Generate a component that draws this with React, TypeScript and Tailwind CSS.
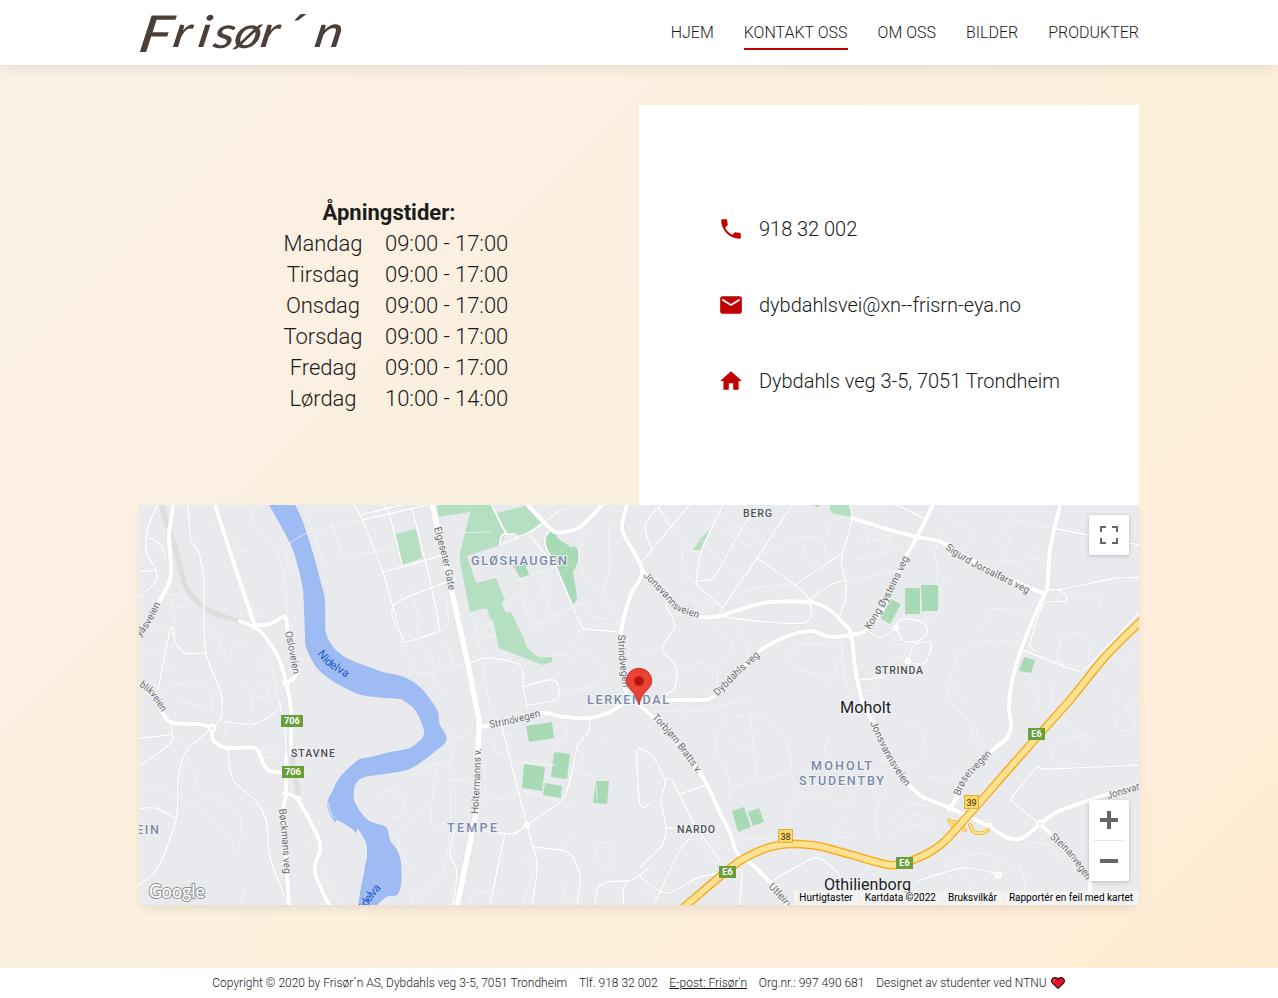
import { MdEmail, MdHome, MdPhone } from "react-icons/md";

const nav = ["HJEM", "KONTAKT OSS", "OM OSS", "BILDER", "PRODUKTER"];

const hours: [string, string][] = [
  ["Mandag", "09:00 - 17:00"],
  ["Tirsdag", "09:00 - 17:00"],
  ["Onsdag", "09:00 - 17:00"],
  ["Torsdag", "09:00 - 17:00"],
  ["Fredag", "09:00 - 17:00"],
  ["Lørdag", "10:00 - 14:00"],
];

const contacts = [
  { Icon: MdPhone, text: "918 32 002" },
  { Icon: MdEmail, text: "dybdahlsvei@xn--frisrn-eya.no" },
  { Icon: MdHome, text: "Dybdahls veg 3-5, 7051 Trondheim" },
];

type P = [number, number];

// Turns a list of points into a path whose corners are rounded off.
function smooth(s: string): string {
  const n = s.trim().split(/[\s,]+/).map(Number);
  const p: P[] = [];
  for (let i = 0; i < n.length; i += 2) p.push([n[i], n[i + 1]]);
  let d = `M${p[0][0]} ${p[0][1]}`;
  for (let i = 0; i < p.length - 1; i++) {
    const a = p[i - 1] ?? p[i];
    const b = p[i];
    const c = p[i + 1];
    const e = p[i + 2] ?? c;
    const k = 7;
    d += `C${b[0] + (c[0] - a[0]) / k} ${b[1] + (c[1] - a[1]) / k} ${c[0] - (e[0] - b[0]) / k} ${c[1] - (e[1] - b[1]) / k} ${c[0]} ${c[1]}`;
  }
  return d;
}

const river =
  "268,503 290,543 298,567 303,590 304,610 305,633 306,647 316,667 331,680 345,688 361,695 385,698 400,699 403,700 415,710 423,727 423,737 410,748 390,752 371,757 358,760 340,777 333,790 328,800 328,810 335,822 337,820 351,828 356,833 358,829 366,843 367,857 365,867 359,907 374,907 386,897 397,895 401,885 401,863 397,850 390,840 386,827 368,820 355,803 354,790 357,782 365,777 385,774 407,770 420,763 433,753 445,743 446,735 440,725 437,710 423,690 410,680 398,675 383,672 351,660 336,650 326,633 325,600 321,583 315,560 308,537 301,517 294,503";

const parks = [
  "395,534 416,529 422,558 402,565",
  "436,505 472,505 470,512 438,517",
  "472,505 492,505 506,533 500,545 467,556 476,583 496,578 505,600 501,602 506,613 511,612 523,637 527,647 537,656 552,657 552,662 543,665 499,648 493,620 490,619 487,608 470,612 460,563 460,553",
  "497,513 528,505 533,508 543,522 528,533 517,535 506,533",
  "830,505 850,505 851,517 830,513",
  "814,505 820,505 817,508",
  "693,550 700,539 710,529 707,540 702,550",
];

const fields = [
  "550,530 556,533 557,538 572,548 574,546 578,550 578,562 573,572 576,590 577,600 572,605 556,568 544,547 545,537",
  "513,565 525,563 529,575 520,578",
  "889,598 901,604 890,624 879,617",
  "905,588 920,588 920,614 905,614",
  "921,585 938,585 938,611 922,611",
  "1024,657 1035,660 1031,673 1019,671",
  "526,726 552,722 554,738 529,742",
  "524,764 545,767 542,791 522,788",
  "554,752 570,754 567,779 551,777",
  "545,783 562,786 561,798 543,795",
  "596,781 609,781 607,804 593,803",
  "732,811 744,807 751,827 738,832",
  "748,812 759,808 764,822 753,826",
];

const lanes = [
  "251,505 253,520 276,550 285,583 287,617",
  "140,622 170,631",
  "285,550 290,543 313,531 360,521",
  "288,550 286,560 291,566 288,572 283,574",
  "313,531 308,520 305,508",
  "313,531 319,548 324,565",
  "330,517 343,555 350,556 398,547",
  "209,525 215,522 223,532 255,613 258,612",
  "228,541 236,539 241,551 248,549",
  "172,600 174,608 184,606 186,598 182,594 165,595",
  "173,606 175,640 170,645",
  "206,626 212,627 224,655 230,655 234,642 244,647",
  "266,642 270,660 276,685 279,710",
  "257,657 260,667 270,667",
  "240,677 243,687 254,688 266,682 268,697 253,697 253,710",
  "140,650 160,657 175,670",
  "163,692 175,685 192,682 205,686 212,698 212,710",
  "180,700 200,706 212,710",
  "460,533 490,532",
  "405,642 412,665 424,674 470,663",
  "440,598 446,598 448,625 440,632",
  "408,586 418,618 418,642 432,660 434,670 441,656",
  "432,670 436,685 450,698",
  "447,641 454,672",
  "470,612 478,640 490,710",
  "476,640 495,635",
  "474,629 492,624",
  "520,580 530,605 544,635",
  "517,580 557,566",
  "540,578 548,576 550,585 542,588 550,610 560,625",
  "507,605 512,598 520,596 530,620",
  "524,633 540,622 570,608 585,605 592,616 608,619",
  "582,627 575,640 580,650 600,662 602,675 590,686 558,694",
  "592,515 580,545 583,575 602,595 617,620",
  "608,520 609,570 602,595",
  "527,647 540,657 566,655 577,668",
  "655,505 670,520 690,550 700,550",
  "705,519 747,545 755,540",
  "700,540 740,575 752,570",
  "715,510 765,545",
  "747,520 765,540",
  "683,550 683,575 696,583 723,608",
  "682,590 700,606 720,602 755,588 795,585",
  "801,537 812,570",
  "757,558 801,537 825,538 832,510",
  "815,532 824,545 825,562",
  "827,560 840,555",
  "852,560 900,550",
  "846,582 900,570",
  "855,545 905,533",
  "862,520 870,545",
  "872,520 882,548",
  "885,520 892,545",
  "668,613 700,618 730,640 728,655 710,675",
  "640,655 660,648",
  "640,690 670,672 700,663 716,670 716,688 705,692",
  "735,625 745,643 750,655",
  "785,660 800,645 830,645 842,650 830,680 820,670",
  "785,656 794,668 815,675 830,690",
  "842,640 843,665 850,700",
  "862,680 882,676 875,690 862,690",
  "835,645 845,640",
  "650,710 690,712 720,706 750,700",
  "930,505 970,530 972,540",
  "945,530 935,550 937,565 937,585",
  "990,545 1000,535 1008,522 1015,520 1050,528",
  "990,575 1005,550 1010,535",
  "998,560 1015,562 1030,574 1032,565",
  "1043,540 1030,556 1048,562",
  "920,620 935,617 942,600 940,584 948,583",
  "890,645 905,645 905,655 890,660",
  "947,685 962,650 995,640 1020,646",
  "980,632 990,610 1010,610 1020,618",
  "1015,605 1030,615 1040,600",
  "1060,640 1057,655 1060,662 1082,667",
  "1060,650 1062,637 1080,633 1090,640 1089,660",
  "1075,600 1090,595 1100,600 1098,607",
  "1110,690 1125,705 1140,698",
  "1110,665 1135,655 1120,672",
  "1030,680 1040,700 1030,708",
  "1050,680 1055,705 1080,690 1095,665",
  "947,685 950,700 970,725 975,745 1010,765",
  "970,705 955,690 950,675",
  "420,773 435,765 450,763 450,730",
  "452,740 470,735",
  "445,780 475,781",
  "450,765 450,830 440,880 415,905",
  "425,770 436,765 431,820 445,830",
  "415,875 400,850 402,830 430,800",
  "390,790 405,800 400,815 390,817",
  "455,870 415,893 412,905",
  "485,765 486,810",
  "492,740 500,733 515,735",
  "493,743 497,753 508,755",
  "510,762 555,765",
  "488,790 500,800 520,792",
  "520,790 545,797 572,807",
  "575,750 583,753 580,770",
  "575,772 594,778 597,800",
  "560,720 568,730 560,745 553,755",
  "600,740 608,735",
  "597,842 612,845 613,865 605,872 597,860 595,845",
  "500,895 475,892 470,905",
  "520,865 535,863 522,905",
  "562,880 565,898 575,900",
  "555,850 580,830",
  "725,715 720,730 715,745 728,775 730,800",
  "750,710 753,745 755,780 740,785 725,795",
  "755,780 790,770 784,735 765,720 735,715",
  "728,740 742,750 755,745",
  "790,770 800,790 830,800 850,805 855,790",
  "795,795 790,810 786,822",
  "830,735 825,755 850,775 840,790",
  "870,760 875,790 890,800",
  "845,820 835,835 855,838",
  "880,800 875,820 880,840",
  "715,847 740,840 795,838 830,850",
  "700,835 712,860 723,862",
  "640,890 665,900",
  "900,720 920,730 925,755 900,765 880,760",
  "945,700 975,725 975,745",
  "925,775 945,780 960,770",
  "890,820 910,805 930,805",
  "890,835 920,825 940,838",
  "895,830 915,815 935,825",
  "1050,760 1060,742 1090,735 1080,755",
  "1065,725 1085,740",
  "1110,710 1120,730 1135,725 1125,705",
  "1060,770 1070,758",
  "1050,770 1070,763 1077,765",
  "1025,842 1050,845 1060,860",
  "940,870 960,857 990,855 1035,880",
  "960,865 970,885",
  "1020,865 1025,895 1000,895",
  "140,760 165,760",
  "177,740 185,745 200,742",
  "225,735 225,720",
  "188,757 200,790 225,803 240,815 239,850",
  "140,790 160,790 205,813 238,850",
  "215,800 222,795",
  "262,750 277,750 277,757 265,757",
  "315,762 303,775",
  "375,800 388,790 398,790",
  "303,850 315,835 320,820",
  "320,865 343,905",
  "245,890 240,905",
];

const streets = [
  "188,505 191,540 198,550 204,580 204,610 206,653 221,693 221,718 211,728",
  "158,505 148,527 146,550 156,570 155,582 140,597",
  "140,571 155,571",
  "147,537 158,543 166,555",
  "158,690 170,630 173,633 176,643 185,653 206,653",
  "353,505 361,517 383,572 386,583 398,623",
  "383,505 390,517 402,565",
  "360,515 398,506 432,500",
  "362,520 432,504",
  "383,572 433,558 445,553",
  "412,508 425,560 432,590 439,626 437,632 405,642 402,636 394,605 455,579",
  "492,505 506,533 514,534 518,540",
  "500,545 501,537 506,533",
  "500,545 528,533 547,520 565,507",
  "530,535 555,567",
  "550,530 545,538 546,548 555,565 572,605 582,627 586,629 620,632",
  "470,663 488,658 520,665 523,687 527,705",
  "523,687 554,680 557,699 527,705",
  "640,563 652,550 670,528 690,505",
  "661,505 645,525 652,550",
  "658,507 671,528",
  "792,505 757,558 723,608 725,617 803,623 810,602 795,585 757,558",
  "757,508 747,520 717,573 710,580 696,583 723,608",
  "723,505 702,550 696,583",
  "850,505 852,520 842,555 842,567 846,582 845,600 840,615",
  "795,585 840,555",
  "810,600 830,585 846,580",
  "665,603 675,627 662,648 676,667 675,687 665,695",
  "867,630 880,638 893,630",
  "897,505 923,518",
  "896,628 900,620 915,620 926,625 926,635 915,642 902,640 896,628",
  "908,660 915,645 930,642 930,652 923,664 908,662",
  "860,680 885,677",
  "1139,613 1087,667 1075,670 1023,650",
  "1047,590 1063,589 1117,578 1139,578",
  "1057,529 1139,545",
  "1058,590 1066,595 1065,601 1045,603 1037,620 1030,645 1036,651",
  "527,825 560,802 567,790 573,767 577,747 588,732 590,720",
  "527,825 512,834 480,830",
  "502,727 527,825 537,865 532,905",
  "505,833 490,905",
  "533,847 560,850 572,856 580,877 577,905",
  "455,830 450,853 457,873 453,905",
  "650,867 632,880 607,882 597,890 595,905",
  "627,882 623,890 624,905",
  "650,803 640,805 637,752 645,751 655,760 665,782 661,800 666,828 662,845 640,867",
  "665,782 672,780 695,825 720,860",
  "678,795 706,785",
  "666,828 695,830 680,850 655,902",
  "640,877 667,893 700,877 742,870",
  "770,882 800,865 819,858 840,875",
  "742,872 740,905",
  "226,722 255,724 278,710",
  "208,731 185,753 178,780 176,820 158,867 139,885",
  "228,750 233,780 255,800 266,820 270,857 285,897",
  "279,700 285,733 287,793",
  "140,765 165,748 172,740 171,722",
  "140,738 170,735",
  "140,809 155,808 176,818",
  "1010,800 1037,767 1047,769 1139,765",
  "1010,800 1040,824",
  "915,882 963,868 998,874",
];

const mains = [
  "173,505 171,520 169,537 171,567 170,580 159,602 139,632",
  "215,505 235,567 253,620 258,625 270,624 285,617 288,633 296,665 295,677 286,683",
  "240,621 261,632 278,657 286,682 291,710 291,753",
  "139,684 155,700 170,722 198,724 211,728 213,740 226,748 255,748 263,763 270,771 284,773",
  "286,757 286,795 283,810 286,860 289,905",
  "284,793 298,800 320,843 315,865 316,877 329,905",
  "528,505 552,530 563,532 580,527 602,505",
  "627,505 623,520 623,533 642,570 630,597 621,632 623,680 630,702",
  "642,570 660,590 680,610 700,617 720,616 763,603 810,602 830,610 843,623 851,633 855,667 862,700 873,723 890,760 907,783 923,797 950,808 990,827 1005,837 1020,839 1030,833 1040,824 1057,812 1090,800 1139,784",
  "630,703 667,700 700,700 715,695 757,653 783,638 810,631 830,637 850,635 867,630 885,605 900,568 917,537 933,505",
  "852,518 890,530 917,537 943,543 993,572 1043,593",
  "1060,505 1050,550 1047,588 1037,610 1022,647 1013,677 1009,705 1011,727 1005,740 993,750 965,778 957,797 950,808",
  "481,727 510,722 540,713 565,717 590,718 610,712 630,702 653,717 700,773 720,813 730,833 737,853 750,863 770,882 788,907",
  "1040,824 1053,837 1088,878 1089,895",
];

const arteries = [
  "432,503 438,530 452,593 467,660 477,710 479,720 478,750 476,810 472,833 457,907",
];

const tunnels = [
  "161,505 175,547 186,587 205,608 222,616 240,621",
  "292,753 294,772 299,796",
];

const motorway =
  "1142,620 1105,657 1070,700 1037,737 973,810 945,841 930,852 913,860 895,865 880,863 827,848 810,845 790,844 767,848 737,863 683,908";
const ramps = ["949,820 955,829 963,824", "970,825 974,832 982,833 988,830", "951,822 958,823 965,830"];

const circles: [number, number, number][] = [
  [212, 728, 3],
  [286, 683, 2],
  [298, 799, 2],
  [527, 825, 2],
  [810, 602, 2],
  [917, 537, 2],
  [850, 635, 2],
  [950, 808, 2],
  [989, 826, 2],
  [1040, 824, 3],
  [896, 628, 2],
  [908, 661, 2],
  [998, 875, 2.5],
];

// id, baseline points, text, drawn length
const streetNames: [string, string, string, number][] = [
  ["asv", "140,637 149,626 161,603", "yåsveien", 39],
  ["oslo", "285,632 288,646 293,673", "Osloveien", 43],
  ["blik", "139,686 150,695 163,714", "blikveien", 35],
  ["elg", "434,528 443,562 449,591", "Elgeseter Gate", 64],
  ["strnd", "618,635 619,658 623,687", "Strindvegen", 53],
  ["jon1", "643,576 664,597 676,610 700,619", "Jonsvannsveien", 71],
  ["dyb", "718,696 738,676 761,655", "Dybdahls veg", 58],
  ["kong", "870,630 890,597 909,558", "Kong Øysteins veg", 82],
  ["sig", "945,549 970,565 1000,580 1028,594", "Sigurd Jorsalfars veg", 94],
  ["str2", "490,728 515,723 541,716", "Strindvegen", 52],
  ["tor", "652,718 673,741 698,775", "Torbjørn Bratts v.", 72],
  ["hol", "478,814 480,780 481,747", "Holtermanns v.", 66],
  ["bock", "279,809 282,840 284,873", "Bøckmans veg", 65],
  ["jon2", "870,723 886,757 905,786", "Jonsvannsveien", 73],
  ["bro", "960,796 968,779 992,754", "Brøsetvegen", 53],
  ["jon3", "1108,799 1125,794 1150,786", "Jonsvann", 41],
  ["ste", "1050,838 1068,855 1087,881", "Steinanvegen", 56],
  ["utl", "768,887 782,902 790,913", "Utleirv", 30],
];

const districts: [number, number, string, number, number][] = [
  [471, 565, "GLØSHAUGEN", 96, 12.6],
  [587, 704, "LERKENDAL", 82, 12.6],
  [447, 832, "TEMPE", 50, 12.6],
  [811, 770, "MOHOLT", 61, 12.6],
  [799, 784.5, "STUDENTBY", 85, 12.6],
  [136, 834, "EIN", 23, 12.6],
];

const hamlets: [number, number, string, number][] = [
  [743, 517, "BERG", 29],
  [875, 674, "STRINDA", 48],
  [291, 757, "STAVNE", 44],
  [677, 833, "NARDO", 38],
];

const shields: [number, number, number, string][] = [
  [281, 715, 22, "706"],
  [282, 766, 22, "706"],
  [719, 866, 17, "E6"],
  [1028, 728, 17, "E6"],
  [896, 857, 17, "E6"],
];

function MapDrawing() {
  return (
    <svg viewBox="139 505 1000 400" width="1000" height="400" className="block bg-[#e8eaed] font-['Roboto',sans-serif] font-normal">
      <path d={smooth(river)} fill="#9fbbf3" />
      <path d="M329 803 Q328 812 335 818" stroke="#e8eaed" strokeWidth="1" fill="none" />
      {parks.map((p) => <polygon key={p} points={p} fill="#b5dfc1" />)}
      {fields.map((p) => <polygon key={p} points={p} fill="#a8dab5" />)}
      <g fill="none" strokeLinejoin="round" strokeLinecap="round">
        {lanes.map((s) => <path key={s} d={smooth(s)} stroke="#f8f9fb" strokeWidth="0.8" opacity="0.8" />)}
        {tunnels.map((s) => <path key={s} d={smooth(s)} stroke="#dededd" strokeWidth="5" strokeLinecap="butt" />)}
        <g stroke="#dfe1e5">
          {streets.map((s) => <path key={s} d={smooth(s)} strokeWidth="2.3" />)}
          {mains.map((s) => <path key={s} d={smooth(s)} strokeWidth="5.3" />)}
          {arteries.map((s) => <path key={s} d={smooth(s)} strokeWidth="7.2" />)}
        </g>
        <g stroke="#fff">
          {streets.map((s) => <path key={s} d={smooth(s)} strokeWidth="1.4" />)}
          {mains.map((s) => <path key={s} d={smooth(s)} strokeWidth="4.2" />)}
          {arteries.map((s) => <path key={s} d={smooth(s)} strokeWidth="5.8" />)}
        </g>
        {circles.map(([x, y, r]) => (
          <circle key={`${x}-${y}`} cx={x} cy={y} r={r} fill="#e8eaed" stroke="#fff" strokeWidth="2.4" />
        ))}
        {ramps.map((s) => <path key={s} d={smooth(s)} stroke="#f6b73c" strokeWidth="4" />)}
        {ramps.map((s) => <path key={s} d={smooth(s)} stroke="#fde293" strokeWidth="2.2" />)}
        <path d={smooth(motorway)} stroke="#f9ab1c" strokeWidth="8.6" />
        <path d={smooth(motorway)} stroke="#fde293" strokeWidth="5.8" />
      </g>

      <g fontSize="10.3" fill="#6b6d70" stroke="#f1f2f4" strokeWidth="2" strokeLinejoin="round" style={{ paintOrder: "stroke" }}>
        {streetNames.map(([id, pts, label, len]) => (
          <g key={id}>
            <path id={`way-${id}`} d={smooth(pts)} fill="none" stroke="none" />
            <text textLength={len} lengthAdjust="spacingAndGlyphs">
              <textPath href={`#way-${id}`} textLength={len} lengthAdjust="spacingAndGlyphs">{label}</textPath>
            </text>
          </g>
        ))}
      </g>
      <g fontSize="11.5" fill="#1a5bbf">
        <path id="way-nid" d={smooth("317,654 328,666 350,680")} fill="none" />
        <path id="way-nid2" d={smooth("362,916 370,902 383,886")} fill="none" />
        <text><textPath href="#way-nid" textLength="38">Nidelva</textPath></text>
        <text><textPath href="#way-nid2" textLength="34">Nidelva</textPath></text>
      </g>
      <g fill="#7b8aa6" stroke="#f1f3f6" strokeWidth="2" style={{ paintOrder: "stroke" }} fontWeight="500">
        {districts.map(([x, y, label, len, size]) => (
          <text key={label} x={x} y={y} fontSize={size} textLength={len} lengthAdjust="spacing">{label}</text>
        ))}
      </g>
      <g fill="#4d5054" stroke="#f1f3f6" strokeWidth="2" style={{ paintOrder: "stroke" }} fontWeight="500" fontSize="10.5">
        {hamlets.map(([x, y, label, len]) => (
          <text key={label} x={x} y={y} textLength={len}>{label}</text>
        ))}
      </g>
      <g fill="#202124" stroke="#f1f3f6" strokeWidth="2" style={{ paintOrder: "stroke" }} fontSize="16">
        <text x="840" y="712.500" textLength="51" lengthAdjust="spacingAndGlyphs">Moholt</text>
        <text x="824" y="890" textLength="87" lengthAdjust="spacingAndGlyphs">Othilienborg</text>
      </g>
      {shields.map(([x, y, w, label]) => (
        <g key={`${x}`}>
          <rect x={x} y={y} width={w} height="12" fill="#689f38" />
          <text x={x + w / 2} y={y + 9.3} textAnchor="middle" fontSize="9.200" fontWeight="700" fill="#fff">{label}</text>
        </g>
      ))}
      {[[778.5, 829.5, "38"], [964.5, 795.5, "39"]].map(([x, y, label]) => (
        <g key={label}>
          <rect x={x} y={y} width="14" height="13" fill="#fdd663" stroke="#d9b13f" />
          <text x={Number(x) + 7} y={Number(y) + 10} textAnchor="middle" fontSize="9" fontWeight="500" fill="#594d2b">{label}</text>
        </g>
      ))}

      <path d="M639 705C637.5 697 634.5 694 630.5 689.5C627.8 686.500 626.2 684.500 626.2 681A12.8 12.8 0 0 1 651.800 681C651.800 684.500 650.200 686.500 647.500 689.500C643.500 694 640.500 697 639 705Z" fill="#ea4335" stroke="#c5221f" strokeWidth="0.8" />
      <circle cx="639" cy="681" r="4.8" fill="#b31412" />

      <text x="149" y="897.5" fontSize="19" fontWeight="500" textLength="56" lengthAdjust="spacingAndGlyphs" fill="#fff" stroke="#8c8f93" strokeWidth="2" strokeLinejoin="round" className="font-['Lato',sans-serif]" style={{ paintOrder: "stroke" }}>Google</text>
    </svg>
  );
}

function Heart() {
  return (
    <svg viewBox="0 0 14 12" className="h-3 w-[14px]">
      <path d="M7 11.400L1.200 5.800C-.3 3.500 1.300.6 4 .6C5.400.6 6.500 1.300 7 2.300C7.500 1.300 8.600.6 10 .6C12.700.6 14.300 3.500 12.800 5.800Z" fill="#e81224" stroke="#201010" strokeWidth="1.100" />
      <path d="M2.500 4.200Q2.600 2.700 4 2.400" fill="none" stroke="#ff8d96" strokeWidth="1" />
    </svg>
  );
}

export default function App() {
  return (
    <div className="flex h-[998px] w-full flex-col bg-[linear-gradient(135deg,#faf0e6_0%,#fbf0e0_35%,#fcefdc_55%,#ffeddb_80%,#ffecd0_100%)] font-['Roboto',sans-serif] font-light text-[#1a1a1a]">
      <header className="h-[65px] shrink-0 bg-white shadow-[0_0_15px_rgba(0,0,0,0.12)]">
        <div className="mx-auto flex h-full w-[1000px] justify-between">
          <svg viewBox="0 0 210 65" width="210" height="65" className="overflow-visible font-['Lato',sans-serif]">
            <text
              transform="translate(0 47) skewX(-10) scale(1.2 1)"
              x="-1 27 48 61 78 100 117 145"
              y="5 0 0 1 1 0 -1 0"
              fontSize="44"
              fontStyle="italic"
              fontWeight="500"
              fill="#4b3f38"
            >
              <tspan fontSize="51">F</tspan>risør´n
            </text>
          </svg>
          <nav className="flex gap-[30px] pt-[17px] text-base leading-8">
            {nav.map((item) => (
              <a
                key={item}
                className={
                  item === "KONTAKT OSS"
                    ? "h-[33px] border-b-2 border-[#c00000]"
                    : "h-[33px]"
                }
              >
                {item}
              </a>
            ))}
          </nav>
        </div>
      </header>

      <main className="mx-auto mt-10 w-[1000px]">
        <div className="grid h-[400px] grid-cols-2">
          <section className="pt-[92px] text-center text-[22px] leading-[31px]">
            <h2 className="font-bold text-[#1c1c1c]">Åpningstider:</h2>
            <div className="ml-[144.500px] flex flex-col tracking-[-0.05px]">
              {hours.map(([day, time]) => (
                <div key={day} className="flex gap-[22.500px]">
                  <span className="w-[79px] whitespace-nowrap">{day}</span>
                  <span className="whitespace-nowrap">{time}</span>
                </div>
              ))}
            </div>
          </section>
          <section className="flex flex-col gap-[46px] bg-white pt-[109px] pl-[79px] text-xl leading-[30px] tracking-[-0.03px]">
            {contacts.map(({ Icon, text }) => (
              <div key={text} className="flex items-center gap-[15px]">
                <Icon className="size-[26px] text-[#c00000]" />
                <span>{text}</span>
              </div>
            ))}
          </section>
        </div>

        <section className="relative h-[400px] overflow-hidden shadow-[0_5px_10px_-2px_rgba(0,0,0,0.09)]">
          <MapDrawing />
          <button className="absolute top-[10px] right-[10px] flex size-10 items-center justify-center rounded-[2px] bg-white shadow-[0_1px_4px_rgba(0,0,0,0.2)]">
            <svg viewBox="0 0 18 18" className="size-[18px]" fill="#666">
              <path d="M0 0v6h2V2h4V0zM12 0v2h4v4h2V0zM16 12v4h-4v2h6v-6zM2 12H0v6h6v-2H2z" />
            </svg>
          </button>
          <div className="absolute right-[10px] bottom-6 flex h-[81px] w-10 flex-col items-center rounded-[2px] bg-white shadow-[0_1px_4px_rgba(0,0,0,0.2)]">
            <button className="flex h-10 items-center">
              <svg viewBox="0 0 18 18" className="size-[18px]" fill="#666"><path d="M7 0h4v7h7v4h-7v7H7v-7H0V7h7z" /></svg>
            </button>
            <div className="h-px w-[30px] bg-[#e6e6e6]" />
            <button className="flex h-10 items-center">
              <svg viewBox="0 0 18 18" className="size-[18px]" fill="#666"><path d="M0 7h18v4H0z" /></svg>
            </button>
          </div>
          <div className="absolute right-0 bottom-0 flex h-[14px] gap-px text-[10px] leading-[14px] font-normal whitespace-nowrap text-black">
            {["Hurtigtaster", "Kartdata ©2022", "Bruksvilkår", "Rapportér en feil med kartet"].map((t) => (
              <span key={t} className="bg-[#f5f5f5]/80 pr-[6px] pl-[5px]">{t}</span>
            ))}
          </div>
        </section>
      </main>

      <footer className="mt-auto flex h-[30px] items-center justify-center gap-[11.700px] bg-white pr-px text-xs">
        <span>Copyright © 2020 by Frisør´n AS, Dybdahls veg 3-5, 7051 Trondheim</span>
        <span>Tlf. 918 32 002</span>
        <a className="underline">E-post: Frisør'n</a>
        <span>Org.nr.: 997 490 681</span>
        <span className="flex items-center gap-1">Designet av studenter ved NTNU <Heart /></span>
      </footer>
    </div>
  );
}
